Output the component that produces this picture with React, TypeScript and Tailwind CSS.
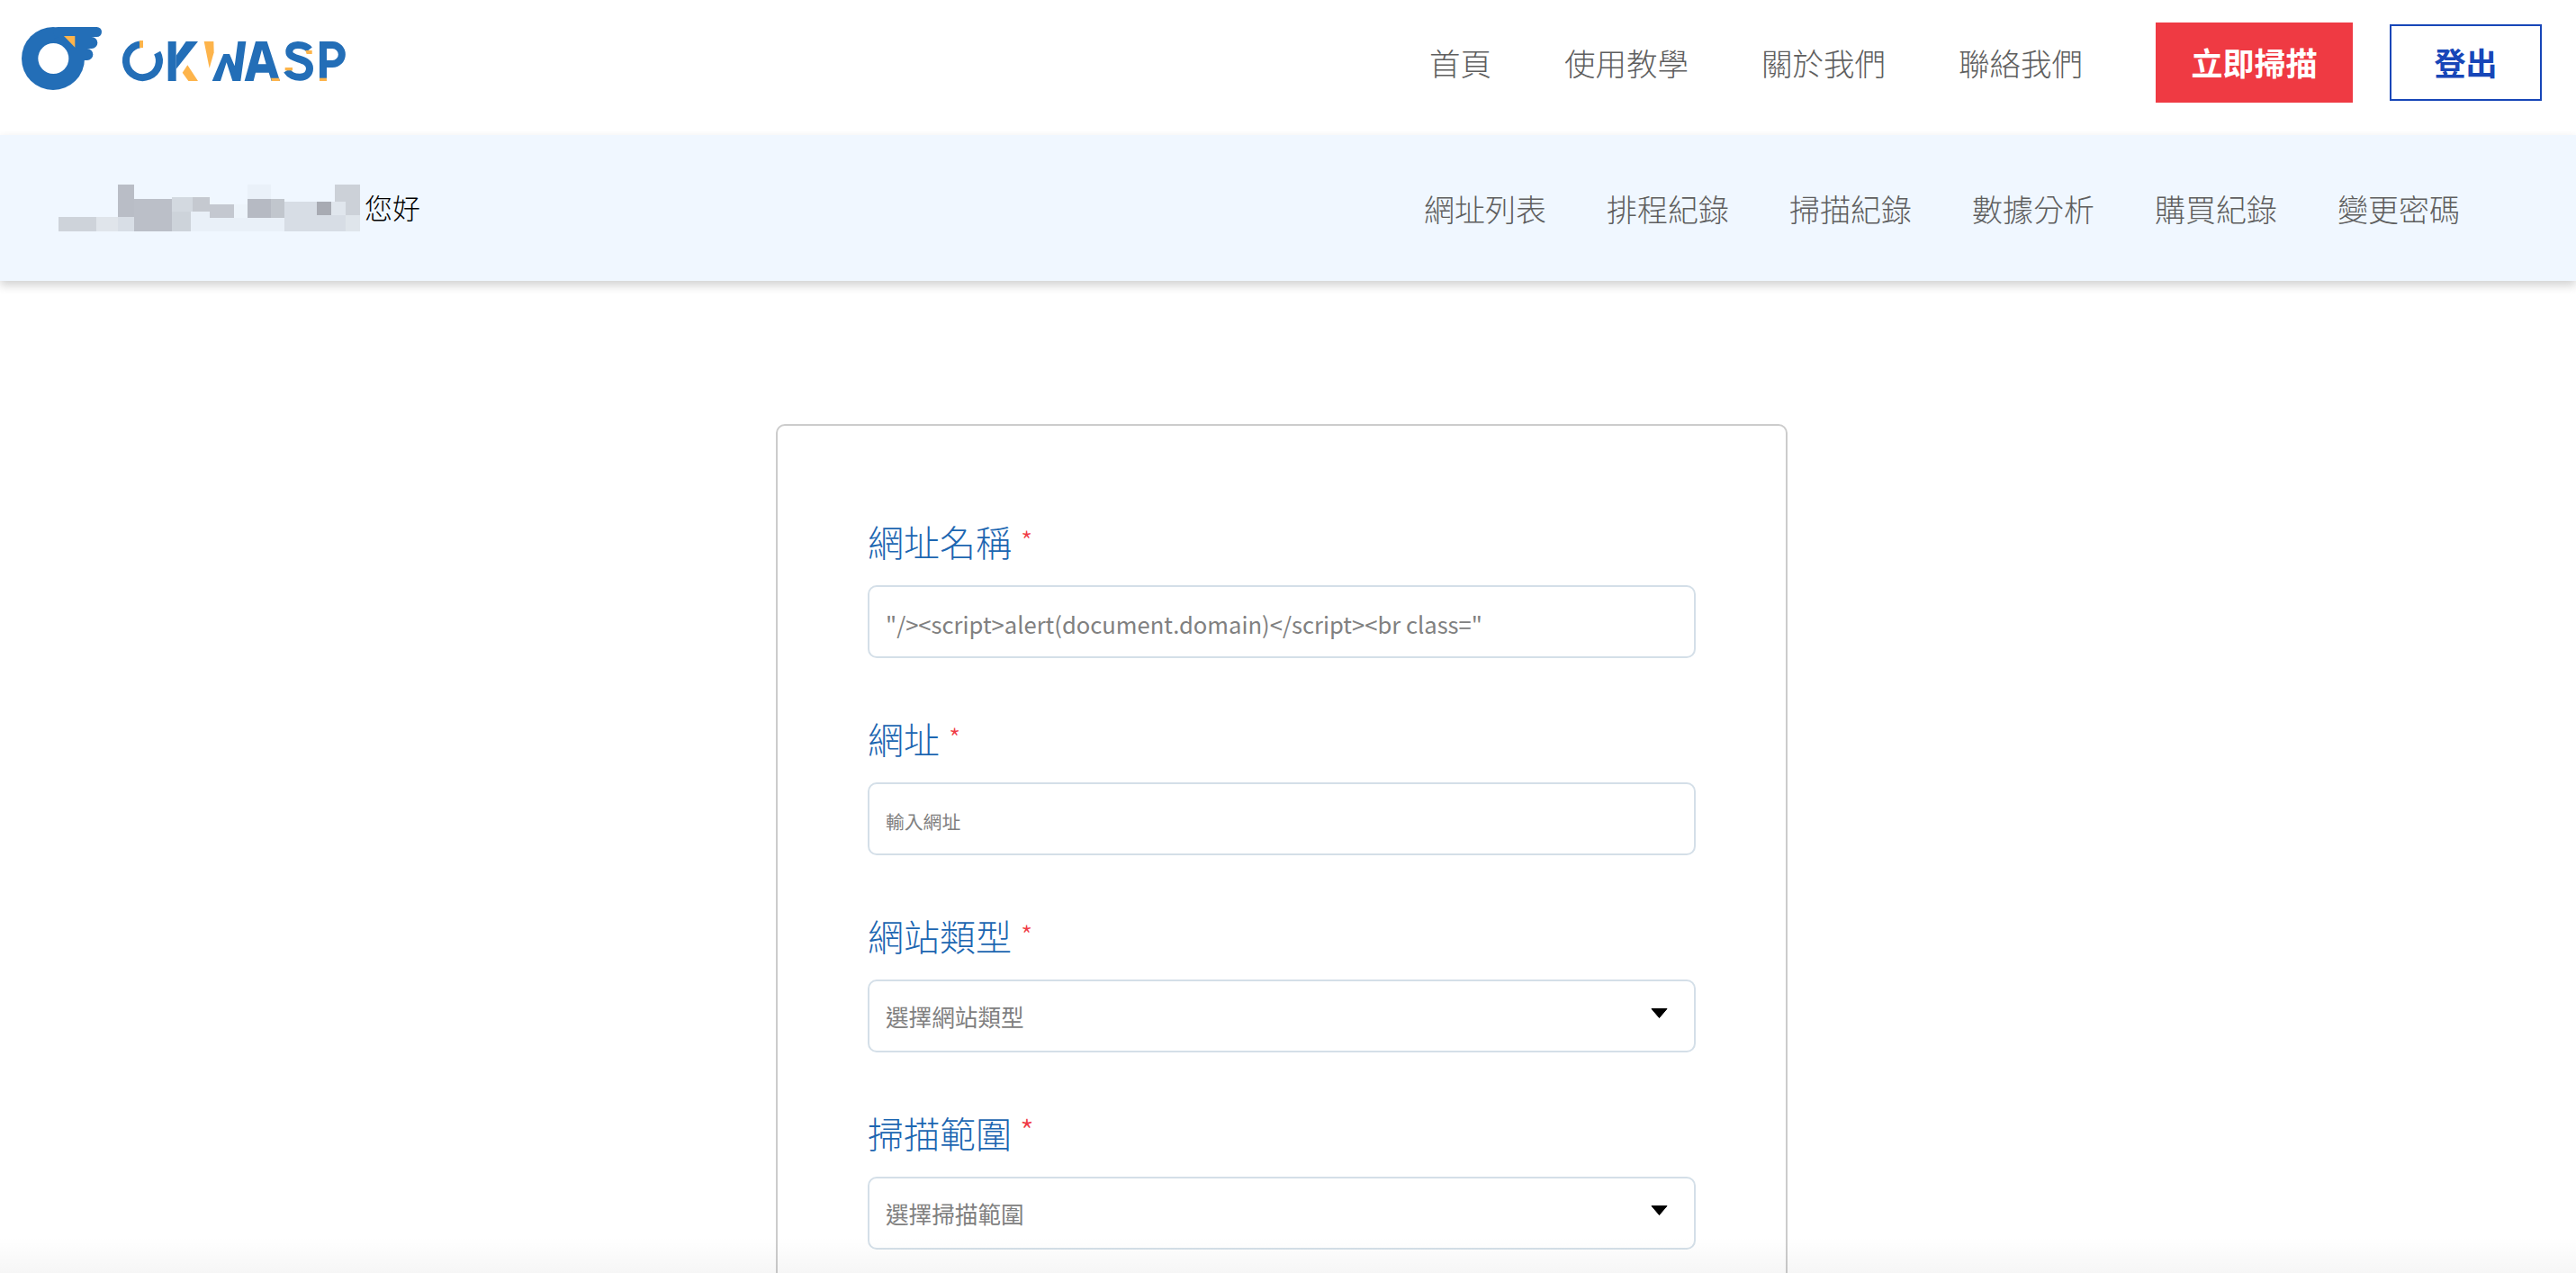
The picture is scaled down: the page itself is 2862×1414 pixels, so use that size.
const font = "font-['Noto_Sans_CJK_TC','Noto_Sans',sans-serif]";

const mainLinks = ['首頁', '使用教學', '關於我們', '聯絡我們'];
const subLinks = ['網址列表', '排程紀錄', '掃描紀錄', '數據分析', '購買紀錄', '變更密碼'];

// pixelated name, colours read from the screenshot
const blurBlocks: [number, number, number, number, string][] = [
  [393, 618, 54, 108, '#b9bdc6'],
  [447, 666, 126, 108, '#bbbfc8'],
  [393, 726, 54, 48, '#d8dee6'],
  [195, 726, 126, 48, '#ced3da'],
  [321, 726, 72, 48, '#e0e5eb'],
  [573, 660, 69, 48, '#d3d9e0'],
  [573, 708, 63, 66, '#cdd3da'],
  [642, 660, 57, 48, '#c5c9d0'],
  [699, 684, 81, 45, '#c4c8d0'],
  [636, 708, 63, 21, '#e9f0f8'],
  [636, 729, 312, 45, '#e9f0f8'],
  [780, 684, 45, 45, '#edf4fb'],
  [825, 666, 78, 63, '#b6bac3'],
  [903, 666, 45, 63, '#c1c6cd'],
  [825, 618, 78, 48, '#eaf1f9'],
  [948, 675, 108, 99, '#d7dde5'],
  [1056, 675, 48, 45, '#a8abb3'],
  [1104, 675, 48, 45, '#e0e6ed'],
  [1056, 720, 96, 54, '#d7dde5'],
  [1152, 720, 48, 54, '#dfe5eb'],
  [1116, 618, 84, 57, '#ccd1d8'],
  [1152, 675, 48, 45, '#ccd1d8'],
];

function Logo() {
  const blue = '#236eb7';
  const orange = '#fdb44b';
  return (
    <svg viewBox="0 0 1200 300" className="w-[400px] h-[100px]" fill="none">
      {/* bird */}
      <circle cx="147" cy="165" r="105" fill={blue} />
      <rect x="147" y="60" width="162" height="33" rx="16.5" fill={blue} />
      <rect x="147" y="93" width="148" height="39" rx="19.5" fill={blue} />
      <rect x="147" y="132" width="133" height="39" rx="19.5" fill={blue} />
      <circle cx="148" cy="165" r="51" fill="#fff" />
      <path d="M183 90H220V128Z" fill={orange} />
      {/* wordmark */}
      <path d="M436 118A55.5 55.5 0 1 0 494 146" stroke={blue} strokeWidth="24" />
      <rect x="435" y="105" width="12" height="24" fill={orange} />
      <rect x="530" y="108" width="27" height="132" fill={blue} />
      <path d="M557 155L590 108H630L557 200Z" fill={blue} />
      <path d="M578 212L595 187L630 240H598Z" fill={orange} />
      <path d="M650 108H682L683 145L668 197Z" fill={orange} />
      <path d="M677 240H705L725 178L745 240H772L790 108H763L752 190L735 150H715Z" fill={blue} />
      <path d="M785 240H815L822 212H866L875 240H903L860 108H822ZM830 184H857L843 135Z" fill={blue} fillRule="evenodd" />
      <path d="M873 230H900L903 240H876Z" fill={orange} />
      <path d="M1001 135C985 115 935 112 934 142C933 172 1002 160 1002 198C1002 236 945 236 926 205" stroke={blue} strokeWidth="24" />
      <path d="M988 138H1010V150H992Z" fill={orange} />
      <path d="M920 195H945V205H920Z" fill={orange} />
      <rect x="1035" y="108" width="24" height="132" fill={blue} />
      <path d="M1047 120H1078A31.5 31.5 0 0 1 1078 183H1058" stroke={blue} strokeWidth="24" />
      <rect x="1035" y="230" width="24" height="10" fill={orange} />
    </svg>
  );
}

function Arrow() {
  return (
    <svg viewBox="0 0 19 11" className="absolute right-[31px] top-[32px] w-[19px] h-[11px]">
      <path d="M1 0.5H18L9.5 10.5Z" fill="#000" stroke="#000" strokeLinejoin="round" />
    </svg>
  );
}

function Field({ label, big, children }: { label: string; big?: boolean; children: React.ReactNode }) {
  return (
    <div className="mb-[59px]">
      <label className="flex items-center h-[60px] mb-[19px] text-[40px] font-light text-[#1c66b1] leading-[60px]">
        {label}
        <span
          className={
            big
              ? 'ml-[9px] -mt-[6px] text-[36px] text-[#f03a45] leading-none'
              : 'ml-[10px] -mt-[2px] text-[30px] text-[#f03a45] leading-none'
          }
        >
          *
        </span>
      </label>
      <div className="relative">{children}</div>
    </div>
  );
}

const boxClass =
  'block w-full h-[81px] px-[18px] bg-white border-2 border-[#d4dfe8] rounded-[10px] outline-none appearance-none text-[#808080]';

export default function App() {
  return (
    <div className={`relative h-screen overflow-hidden bg-white ${font}`}>
      <header className="flex items-center justify-between h-[150px] pb-[11px] pl-[10px] pr-[38px]">
        <div className="mb-[19px]">
          <Logo />
        </div>
        <nav className="flex items-center">
          <div className="flex items-center gap-[81px] mr-[81px] text-[34.5px] font-light text-[#5e5e5e]">
            {mainLinks.map((l) => (
              <a key={l}>{l}</a>
            ))}
          </div>
          <a className="flex items-center justify-center w-[219px] h-[89px] bg-[#ef3a43] text-[35px] font-bold text-white">
            立即掃描
          </a>
          <a className="flex items-center justify-center ml-[41px] w-[169px] h-[85px] border-2 border-[#1746b8] text-[35px] font-bold text-[#1746b8]">
            登出
          </a>
        </nav>
      </header>

      <div className="relative flex items-center justify-between h-[162px] pl-[65px] pr-[129px] bg-[#f0f7ff] shadow-[0_5px_10px_rgba(0,0,0,0.18)]">
        <div className="flex items-center">
          <svg viewBox="195 618 1005 156" className="w-[335px] h-[52px]">
            {blurBlocks.map(([x, y, w, h, c], i) => (
              <rect key={i} x={x} y={y} width={w} height={h} fill={c} />
            ))}
          </svg>
          <span className="ml-[5px] mb-[2px] text-[31px] font-light text-black">您好</span>
        </div>
        <nav className="flex items-center gap-[67px] text-[34px] font-light text-[#5e5e5e]">
          {subLinks.map((l) => (
            <a key={l}>{l}</a>
          ))}
        </nav>
      </div>

      <main className="flex justify-center pt-[159px] pr-[14px]">
        <form className="w-[1124px] pt-[98px] px-[100px] border-2 border-[#cccccc] rounded-[10px]">
          <Field label="網址名稱">
            <input
              className={`${boxClass} pt-[3px] text-[25.6px]`}
              readOnly
              value={'"/><script>alert(document.domain)</script><br class="'}
            />
          </Field>
          <Field label="網址">
            <input className={`${boxClass} pt-[4px] text-[20.8px] placeholder:text-[#808080]`} placeholder="輸入網址" />
          </Field>
          <Field label="網站類型">
            <select className={`${boxClass} pt-[2px] text-[25.6px]`} defaultValue="">
              <option value="">選擇網站類型</option>
            </select>
            <Arrow />
          </Field>
          <Field label="掃描範圍" big>
            <select className={`${boxClass} pt-[2px] text-[25.6px]`} defaultValue="">
              <option value="">選擇掃描範圍</option>
            </select>
            <Arrow />
          </Field>
        </form>
      </main>

      {/* faint fade along the bottom edge */}
      <div className="absolute inset-x-0 bottom-0 h-[40px] bg-gradient-to-b from-transparent to-[#00000009] pointer-events-none" />
    </div>
  );
}
